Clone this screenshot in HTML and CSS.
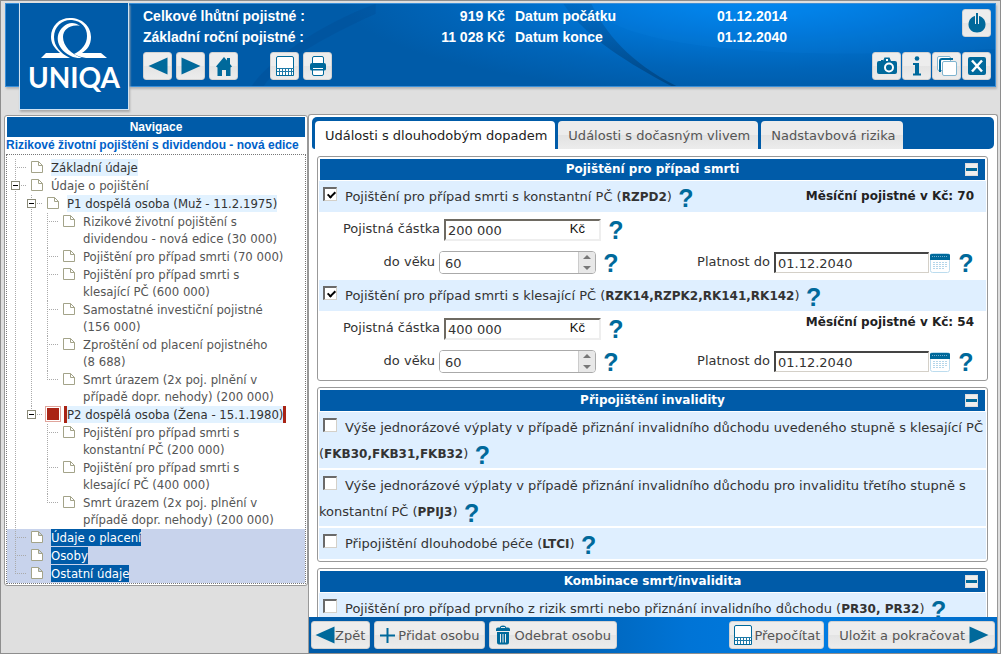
FILE: index.html
```html
<!DOCTYPE html>
<html lang="cs">
<head>
<meta charset="utf-8">
<title>UNIQA – Rizikové životní pojištění</title>
<link rel="stylesheet" href="styles.css">
</head>
<body class="app">
<svg class="sprite" aria-hidden="true">
  <symbol id="i-left" viewBox="0 0 20 18"><path d="M19.500 0.500V17.500L0.500 9Z" fill="#00699b"/></symbol>
  <symbol id="i-right" viewBox="0 0 20 18"><path d="M0.500 0.500V17.500L19.500 9Z" fill="#00699b"/></symbol>
  <symbol id="i-calc" viewBox="0 0 18 20"><path d="M.5 19.500V2Q.5.5 2 .5H16Q17.500.5 17.500 2V19.500Z" fill="#fff" stroke="#00699b"/><path d="M0 12.500H18M1 15.500H17M3.500 12V19M6.500 12V19M9.500 12V19M12.500 12V19M15.500 12V19" stroke="#1f7aa8" fill="none"/></symbol>
  <symbol id="i-page" viewBox="0 0 12 12"><path d="M.5.5H7.500L11.500 4.500V11.500H.5ZM7.500.5V4.500H11.500" fill="#fff" stroke="#a3a389"/></symbol>
  <symbol id="i-cal" viewBox="0 0 20 20"><rect x=".5" y=".5" width="19" height="19" rx="2" fill="#fff" stroke="#bcdcee"/><path d="M0 7V2Q0 1 2 1H18Q20 1 20 2V7Z" fill="#00699b"/><path d="M2 3.500H18" stroke="#77b0cf" stroke-dasharray="1 1"/><path d="M3 9.500H17M3 11.500H17M3 13.500H17M3 15.500H15" stroke="#b4d6ea" stroke-dasharray="2 1"/></symbol>
</svg>

<header class="top">
  <svg class="swoosh" viewBox="0 0 990 84" preserveAspectRatio="none" aria-hidden="true">
    <defs><linearGradient id="sw" x1="0" y1="0" x2="0" y2="1"><stop offset="0" stop-color="#004f96" stop-opacity=".25"/><stop offset="1" stop-color="#004480" stop-opacity=".85"/></linearGradient></defs>
    <path d="M558 0H586C600 30 625 60 671 84H666C625 62 580 34 558 0Z" fill="url(#sw)"/>
    <path d="M586 0C600 35 720 62 990 46V0Z" fill="#1a9cff" fill-opacity=".08"/>
    <path d="M258 84C275 60 310 38 370 10V0C310 22 262 60 246 84Z" fill="#003f80" fill-opacity=".18"/>
  </svg>
  <a class="logo" href="#" aria-label="UNIQA">
    <svg class="logo-mark" viewBox="0 0 66 42" aria-hidden="true"><path fill="#fff" d="M0 41L5 36H19C13 31 10 26 10 20C10 9 18 1 29 1C41 1 50 9 50 20C50 28 46 33 41 36H60L66 41H45C40 40 36 39 33 37C41 33 46 27 46 19C46 11 41 4 31 3C22 2 13 9 13 20C13 29 19 36 29 41Z"/><path fill="#fff" d="M39 9C34 5 27 5 22 10C13 18 15 33 32 40C35 41 38 41 41 41C30 37 22 29 22 20C22 13 29 7 39 9Z"/></svg>
    <span class="logo-text">UNIQA</span>
  </a>
  <div class="top-info">
    <div class="totals">
      <span>Celkové lhůtní pojistné :</span><span class="num">919 Kč</span><span>Datum počátku</span><span>01.12.2014</span>
      <span>Základní roční pojistné :</span><span class="num">11 028 Kč</span><span>Datum konce</span><span>01.12.2040</span>
    </div>
    <div class="tools">
      <button class="btn icon" aria-label="Zpět"><svg width="20" height="18"><use href="#i-left"/></svg></button>
      <button class="btn icon" aria-label="Vpřed"><svg width="20" height="18"><use href="#i-right"/></svg></button>
      <button class="btn icon" aria-label="Domů"><svg width="18" height="20" viewBox="0 0 18 20"><path d="M1 10.500L9 1L12 4.500V2H15V8L17 10.500L15.500 11.500V20H11V14H7V20H2.500V11.500Z" fill="#00699b"/></svg></button>
      <button class="btn icon calc" aria-label="Přepočet"><svg width="18" height="20"><use href="#i-calc"/></svg></button>
      <button class="btn icon" aria-label="Tisk"><svg width="18" height="20" viewBox="0 0 18 20"><rect x="3.500" y=".5" width="11" height="19" rx="1.500" fill="#fff" stroke="#00699b"/><path d="M3 7H15Q17 7 17 9V13Q17 14.500 15 14.500H3Q1 14.500 1 13V9Q1 7 3 7Z" fill="#00699b"/><path d="M4 12.500H14" stroke="#fff"/></svg></button>
    </div>
  </div>
  <div class="top-right">
    <button class="btn icon" aria-label="Odhlásit"><svg width="18" height="20" viewBox="0 0 18 20"><path d="M9 2.500C13 2.500 17.500 6 17.500 11.500C17.500 16 14 19.500 9 19.500S.5 16 .5 11.500C.5 6 5 2.500 9 2.500Z" fill="#00699b"/><path d="M9 0V11" stroke="#eee" stroke-width="4"/><path d="M9 0V11" stroke="#00699b" stroke-width="2"/></svg></button>
    <div class="mini">
      <button class="btn icon" aria-label="Snímek"><svg width="20" height="20" viewBox="0 0 20 20"><path d="M0 7Q0 5 2 5H4V4H6V5L7.500 1.500H12.500L14 5H18Q20 5 20 7V16Q20 18 18 18H2Q0 18 0 16Z" fill="#00699b"/><circle cx="12" cy="11.500" r="4" fill="none" stroke="#fff" stroke-width="2"/><rect x="9" y="3" width="2" height="2" fill="#fff"/></svg></button>
      <button class="btn icon" aria-label="Informace"><svg width="10" height="20" viewBox="0 0 10 20"><circle cx="5" cy="2.500" r="2.300" fill="#00699b"/><path d="M1 7H7V17.500H9V19.500H1V17.500H3V9H1Z" fill="#00699b"/></svg></button>
      <button class="btn icon" aria-label="Okna"><svg width="20" height="20" viewBox="0 0 20 20"><rect x=".5" y=".5" width="13" height="14" rx="1.500" fill="#fff" stroke="#7fb4cf"/><path d="M3 16V5Q3 3 5 3H16" fill="none" stroke="#00699b" stroke-width="2"/><rect x="5.500" y="5.500" width="14" height="14" rx="1.500" fill="#fff" stroke="#7fb4cf"/></svg></button>
      <button class="btn icon" aria-label="Zavřít"><svg width="18" height="18" viewBox="0 0 18 18"><rect width="18" height="18" rx="2" fill="#00699b"/><path d="M4 3.500L14 14.500M14 3.500L4 14.500" stroke="#fff" stroke-width="2.500"/></svg></button>
    </div>
  </div>
</header>

<div class="columns">
  <nav class="nav" aria-label="Navigace">
    <h2 class="nav-title">Navigace</h2>
    <p class="nav-product">Rizikové životní pojištění s dividendou - nová edice</p>
    <ul class="tree">
      <li><div class="node"><i class="link"></i><svg class="page"><use href="#i-page"/></svg><a class="hot" href="#">Základní údaje</a></div></li>
      <li><div class="node"><i class="link"></i><button class="toggle" aria-label="Sbalit"></button><svg class="page"><use href="#i-page"/></svg><a href="#">Údaje o pojištění</a></div>
        <ul>
          <li><div class="node"><i class="link"></i><button class="toggle" aria-label="Sbalit"></button><svg class="page"><use href="#i-page"/></svg><a class="hot" href="#">P1 dospělá osoba (Muž - 11.2.1975)</a></div>
            <ul>
              <li><div class="node"><i class="link"></i><svg class="page"><use href="#i-page"/></svg><a href="#">Rizikové životní pojištění s dividendou - nová edice (30&nbsp;000)</a></div></li>
              <li><div class="node"><i class="link"></i><svg class="page"><use href="#i-page"/></svg><a href="#">Pojištění pro případ smrti (70&nbsp;000)</a></div></li>
              <li><div class="node"><i class="link"></i><svg class="page"><use href="#i-page"/></svg><a href="#">Pojištění pro případ smrti s klesající PČ (600&nbsp;000)</a></div></li>
              <li><div class="node"><i class="link"></i><svg class="page"><use href="#i-page"/></svg><a href="#">Samostatné investiční pojistné (156&nbsp;000)</a></div></li>
              <li><div class="node"><i class="link"></i><svg class="page"><use href="#i-page"/></svg><a href="#">Zproštění od placení pojistného (8&nbsp;688)</a></div></li>
              <li><div class="node"><i class="link"></i><svg class="page"><use href="#i-page"/></svg><a href="#">Smrt úrazem (2x poj. plnění v případě dopr. nehody) (200&nbsp;000)</a></div></li>
            </ul>
          </li>
          <li><div class="node"><i class="link"></i><button class="toggle" aria-label="Sbalit"></button><span class="page alert"></span><a class="hot current" href="#">P2 dospělá osoba (Žena - 15.1.1980)</a></div>
            <ul>
              <li><div class="node"><i class="link"></i><svg class="page"><use href="#i-page"/></svg><a href="#">Pojištění pro případ smrti s konstantní PČ (200&nbsp;000)</a></div></li>
              <li><div class="node"><i class="link"></i><svg class="page"><use href="#i-page"/></svg><a href="#">Pojištění pro případ smrti s klesající PČ (400&nbsp;000)</a></div></li>
              <li><div class="node"><i class="link"></i><svg class="page"><use href="#i-page"/></svg><a href="#">Smrt úrazem (2x poj. plnění v případě dopr. nehody) (200&nbsp;000)</a></div></li>
            </ul>
          </li>
        </ul>
      </li>
      <li class="picked"><div class="node"><i class="link"></i><svg class="page"><use href="#i-page"/></svg><a href="#">Údaje o placení</a></div></li>
      <li class="picked"><div class="node"><i class="link"></i><svg class="page"><use href="#i-page"/></svg><a href="#">Osoby</a></div></li>
      <li class="picked"><div class="node"><i class="link"></i><svg class="page"><use href="#i-page"/></svg><a href="#">Ostatní údaje</a></div></li>
    </ul>
  </nav>

  <main class="main">
    <div class="tabs" role="tablist">
      <button class="tab active" role="tab" aria-selected="true">Události s dlouhodobým dopadem</button>
      <button class="tab" role="tab">Události s dočasným vlivem</button>
      <button class="tab" role="tab">Nadstavbová rizika</button>
    </div>

    <div class="sections">
      <section class="box">
        <div class="box-head"><h3>Pojištění pro případ smrti</h3><button class="fold" aria-label="Sbalit"></button></div>
        <div class="risk">
          <span class="price">Měsíční pojistné v Kč: 70</span>
          <input class="check" type="checkbox" id="r1" checked><label for="r1">Pojištění pro případ smrti s konstantní PČ (<b>RZPD2</b>)</label> <button class="help" aria-label="Nápověda">?</button>
        </div>
        <div class="fields">
          <div class="field-row">
            <label class="wide" for="a1">Pojistná částka</label>
            <span class="money"><input class="text" id="a1" value="200 000"><span class="unit">Kč</span></span>
            <button class="help" aria-label="Nápověda">?</button>
          </div>
          <div class="field-row">
            <label class="narrow" for="v1">do věku</label>
            <span class="spin"><input id="v1" value="60"><span class="arrows"><button class="up" aria-label="Více"></button><button class="down" aria-label="Méně"></button></span></span>
            <button class="help" aria-label="Nápověda">?</button>
            <span class="valid"><label for="d1">Platnost do</label><input class="text date" id="d1" value="01.12.2040"><button class="cal" aria-label="Kalendář"><svg width="20" height="20"><use href="#i-cal"/></svg></button><button class="help" aria-label="Nápověda">?</button></span>
          </div>
        </div>
        <div class="risk">
          <input class="check" type="checkbox" id="r2" checked><label for="r2">Pojištění pro případ smrti s klesající PČ (<b>RZK14,RZPK2,RK141,RK142</b>)</label> <button class="help" aria-label="Nápověda">?</button>
        </div>
        <div class="fields">
          <div class="field-row">
            <label class="wide" for="a2">Pojistná částka</label>
            <span class="money"><input class="text" id="a2" value="400 000"><span class="unit">Kč</span></span>
            <button class="help" aria-label="Nápověda">?</button>
            <span class="price push">Měsíční pojistné v Kč: 54</span>
          </div>
          <div class="field-row">
            <label class="narrow" for="v2">do věku</label>
            <span class="spin"><input id="v2" value="60"><span class="arrows"><button class="up" aria-label="Více"></button><button class="down" aria-label="Méně"></button></span></span>
            <button class="help" aria-label="Nápověda">?</button>
            <span class="valid"><label for="d2">Platnost do</label><input class="text date" id="d2" value="01.12.2040"><button class="cal" aria-label="Kalendář"><svg width="20" height="20"><use href="#i-cal"/></svg></button><button class="help" aria-label="Nápověda">?</button></span>
          </div>
        </div>
      </section>

      <section class="box spaced">
        <div class="box-head"><h3>Připojištění invalidity</h3><button class="fold" aria-label="Sbalit"></button></div>
        <div class="risk"><input class="check" type="checkbox" id="r3"><label for="r3">Výše jednorázové výplaty v případě přiznání invalidního důchodu uvedeného stupně s klesající PČ (<b>FKB30,FKB31,FKB32</b>)</label> <button class="help" aria-label="Nápověda">?</button></div>
        <div class="risk"><input class="check" type="checkbox" id="r4"><label for="r4">Výše jednorázové výplaty v případě přiznání invalidního důchodu pro invaliditu třetího stupně s konstantní PČ (<b>PPIJ3</b>)</label> <button class="help" aria-label="Nápověda">?</button></div>
        <div class="risk"><input class="check" type="checkbox" id="r5"><label for="r5">Připojištění dlouhodobé péče (<b>LTCI</b>)</label> <button class="help" aria-label="Nápověda">?</button></div>
      </section>

      <section class="box">
        <div class="box-head"><h3>Kombinace smrt/invalidita</h3><button class="fold" aria-label="Sbalit"></button></div>
        <div class="risk"><input class="check" type="checkbox" id="r6"><label for="r6">Pojištění pro případ prvního z rizik smrti nebo přiznání invalidního důchodu (<b>PR30, PR32</b>)</label> <button class="help" aria-label="Nápověda">?</button></div>
      </section>
    </div>

    <footer class="actions">
      <button class="btn back"><svg width="20" height="18"><use href="#i-left"/></svg>Zpět</button>
      <button class="btn plus"><svg width="15" height="15" viewBox="0 0 15 15"><path d="M7.500 0V15M0 7.500H15" stroke="#00699b" stroke-width="2"/></svg>Přidat osobu</button>
      <button class="btn bin"><svg width="14" height="20" viewBox="0 0 14 20"><path d="M0 4.500Q0 2.500 2 2.500H4Q4 .5 7 .5T10 2.500H12Q14 2.500 14 4.500V6H0ZM1 7H13V17.500Q13 19.500 11 19.500H3Q1 19.500 1 17.500Z" fill="#00699b"/><path d="M4.500 9V17.500M7 9V17.500M9.500 9V17.500M5 2.500H9" stroke="#eee"/></svg>Odebrat osobu</button>
      <button class="btn recalc"><svg width="18" height="20"><use href="#i-calc"/></svg>Přepočítat</button>
      <button class="btn save">Uložit a pokračovat<svg width="20" height="18"><use href="#i-right"/></svg></button>
    </footer>
  </main>
</div>
</body>
</html>
```

FILE: styles.css
```css
* { box-sizing: border-box; }
.app {
  margin: 0;
  height: 100vh;
  display: flex;
  flex-direction: column;
  overflow: hidden;
  border: 1px solid #8e8e8e;
  background: #dfdfdf;
  color: #333;
  font: 13px/17px Verdana, "DejaVu Sans", sans-serif;
}
.sprite { display: none; }
button, input { font: inherit; color: inherit; margin: 0; }
button { cursor: pointer; padding: 0; }
svg { flex: none; display: block; }

.top {
  position: relative;
  display: flex;
  flex: none;
  margin: 2px 4px 0;
  border: 1px solid #3b8fd8;
  background: radial-gradient(ellipse 420px 100px at 76% -12%, #008af5, #0079dc 35%, #0064b8 75%, #005ba8 100%);
  box-shadow: 1px 2px 2px #b5b5b5;
  color: #fff;
}
.swoosh { position: absolute; inset: 0; width: 100%; height: 100%; }
.logo {
  position: relative;
  display: flex;
  flex-direction: column;
  align-items: center;
  width: 110px;
  height: 107px;
  margin: -1px 14px -24px 13px;
  padding-top: 14px;
  border: 1px solid #cfe2f2;
  border-top: 0;
  background: #005ba8;
  box-shadow: 1px 2px 2px #aaa;
  color: #fff;
  text-decoration: none;
}
.logo-mark { width: 66px; height: 42px; }
.logo-text { font: 700 28px/36px Lato, sans-serif; }
.top-info { position: relative; flex: 1; padding: 2px 0 6px; }
.totals {
  display: grid;
  grid-template-columns: 222px 130px 192px auto;
  column-gap: 10px;
  font: 700 14px/21px "Liberation Sans", Arial, sans-serif;
}
.num { text-align: right; }
.tools { display: flex; gap: 4px; margin-top: 4px; }
.calc { margin-left: 28px; }
.top-right {
  position: relative;
  display: flex;
  flex-direction: column;
  justify-content: space-between;
  align-items: flex-end;
  padding: 5px 4px 6px 0;
}
.mini { display: flex; gap: 1px; }

.btn {
  display: flex;
  align-items: center;
  height: 28px;
  padding: 0 5px;
  border: 1px solid #d2d2d2;
  border-radius: 3px;
  background: linear-gradient(#ededed 50%, #e4e4e4 50%, #ececec);
  color: #555;
}
.icon { width: 29px; padding: 0; justify-content: center; }

.columns { flex: 1; min-height: 0; display: flex; margin: 27px 2px 0 3px; }
.nav {
  width: 304px;
  flex: none;
  align-self: flex-start;
  margin-top: 1px;
  padding: 1px;
  border: 1px solid #999;
  border-radius: 3px;
  background: #fff;
}
.nav-title {
  margin: 0 1px;
  background: #005ba8;
  color: #fff;
  font: 700 12px/20px "Liberation Sans", Arial, sans-serif;
  text-align: center;
}
.nav-product { margin: 1px 0; color: #0061c9; font: 700 12px/15px "Liberation Sans", Arial, sans-serif; white-space: nowrap; }
.tree {
  border: 1px dotted #777;
  padding-top: 4px;
  font: 13px/17px Tahoma, "DejaVu Sans Condensed", sans-serif;
}
.tree, .tree ul { list-style: none; margin: 0; }
.tree ul { margin-left: 16px; padding: 0; }
.tree { padding-left: 0; }
.tree li {
  background: repeating-linear-gradient(#aaa 0 1px, transparent 1px 2px) 0 0 / 1px 100% no-repeat;
}
.tree > li { padding-left: 8px; background-position: 8px 0; }
.tree li:last-child { background-size: 1px 10px; }
.tree .picked { background-color: #c8d3ec; }
.node { position: relative; display: flex; align-items: flex-start; padding-bottom: 1px; }
.link {
  width: 11px;
  height: 1px;
  margin: 8px 5px 0 0;
  flex: none;
  background: repeating-linear-gradient(90deg, #aaa 0 1px, transparent 1px 2px);
}
.toggle {
  position: absolute;
  left: -4px;
  top: 4px;
  width: 9px;
  height: 9px;
  border: 1px solid #8a8a78;
  background: linear-gradient(#000, #000) center / 5px 1px no-repeat #fff;
}
.page { width: 12px; height: 12px; margin: 2px 8px 0 0; flex: none; }
.alert { background: #a92415; outline: 1px solid #e0a59c; outline-offset: 1px; }
.node a { color: #555; text-decoration: none; max-width: 204px; }
.node a.hot { max-width: none; background: #e2f2ff; color: #333; white-space: nowrap; }
.node a.current { margin-left: -3px; border: solid #a92415; border-width: 0 3px; }
.tree .picked a { background: #005ba8; color: #fff; }

.main {
  flex: 1;
  min-width: 0;
  display: flex;
  flex-direction: column;
  border: 1px solid #999;
  border-bottom: 0;
  border-radius: 3px 3px 0 0;
  background: #fff;
}
.tabs {
  display: flex;
  gap: 3px;
  flex: none;
  margin: 2px 3px 0;
  padding: 4px 3px 0;
  border-radius: 5px 5px 5px 3px;
  background: #005ba8;
}
.tab {
  height: 28px;
  padding: 0 8px 0 10px;
  border: 0;
  border-radius: 4px 4px 0 0;
  background: linear-gradient(#ececec 50%, #e2e2e2 50%, #ececec);
  color: #555;
}
.tab.active { background: #fff; color: #222; }
.sections { flex: 1; min-height: 0; overflow-y: auto; scrollbar-width: none; padding: 7px 9px 0 8px; }
.box { margin-bottom: 6px; padding: 2px 1px 1px; border: 1px solid #999; border-radius: 3px; }
.box-head { display: flex; align-items: center; margin: 0 1px 1px; padding: 0 7px 0 20px; background: #005ba8; color: #fff; }
.box-head h3 { flex: 1; margin: 0; font-size: 12px; line-height: 21px; text-align: center; }
.fold { width: 13px; height: 13px; border: 1px solid #ddd; background: linear-gradient(#00699b, #00699b) center / 11px 3px no-repeat #eee; }
.risk { min-height: 31px; padding: 3px 0 1px; background: #dfefff; line-height: 26px; }
.risk b { font-size: 12px; }
.spaced { padding-bottom: 2px; }
.spaced .risk + .risk { margin-top: 2px; }
.check {
  appearance: none;
  position: relative;
  width: 14px;
  height: 14px;
  margin: 0 8px 0 4px;
  vertical-align: 0;
  border: solid;
  border-width: 2px 1px 1px 2px;
  border-color: #6a6a6a #d4d0c8 #d4d0c8 #6a6a6a;
  background: #fff;
}
.check:checked::after {
  content: "";
  position: absolute;
  left: 4px;
  top: 1px;
  width: 3px;
  height: 6px;
  border: solid #000;
  border-width: 0 2px 2px 0;
  transform: rotate(45deg);
}
.price { float: right; margin-right: 12px; color: #222; font-weight: 700; line-height: 24px; font-size: 12px; }
.push { margin-left: auto; align-self: flex-start; line-height: 20px; }
.help {
  width: 16px;
  height: 24px;
  margin-left: 4px;
  border: 0;
  background: none;
  color: #00699b;
  font: 700 25px/24px "Liberation Sans", Arial, sans-serif;
  vertical-align: middle;
}
.risk .help { margin-left: 2px; }
.fields { padding: 1px 0; }
.field-row { display: flex; align-items: center; height: 33px; }
.field-row label { text-align: right; padding-bottom: 2px; }
.wide { width: 121px; }
.narrow { width: 116px; }
.money, .spin { position: relative; width: 157px; margin: 0 3px 0 4px; }
.text {
  width: 100%;
  height: 22px;
  padding: 1px 2px 0;
  border: 2px solid;
  border-color: #6e6a62 #eee #eee #6e6a62;
  background: #fff;
}
.unit { position: absolute; right: 16px; top: 1px; color: #111; font: 13px/17px "Liberation Sans", Arial, sans-serif; }
.spin { display: flex; height: 23px; border: 1px solid #aaa; border-radius: 4px; overflow: hidden; background: #fff; }
.spin input { flex: 1; min-width: 0; border: 0; padding: 1px 5px 0; }
.arrows { width: 17px; display: flex; flex-direction: column; border-left: 1px solid #ccc; background: #e8e8e8; }
.arrows button { flex: 1; display: flex; align-items: center; justify-content: center; border: 0; background: none; }
.up::before, .down::before { content: ""; border: 4px solid transparent; }
.up::before { border-top: 0; border-bottom-color: #777; }
.down::before { border-bottom: 0; border-top-color: #777; }
.valid { display: flex; align-items: center; margin-left: auto; padding-right: 12px; }
.date { width: 155px; height: 21px; margin-left: 4px; border-width: 2px 1px 1px 2px; border-color: #444 #d4d0c8 #d4d0c8 #444; }
.cal { height: 20px; margin: 0 4px 0 1px; border: 0; background: none; }

.actions {
  display: flex;
  flex: none;
  gap: 4px;
  padding: 4px 2px;
  background: linear-gradient(90deg, #005ba8 0, #005ba8 30%, #0074d6 55%, #007ce2 75%, #006cc8);
}
.back { padding: 0 4px 0 3px; }
.plus { padding: 0 5px; }
.plus svg { margin-right: 3px; }
.bin { padding: 0 5px 0 6px; }
.bin svg { margin-right: 4px; }
.recalc { margin-left: auto; padding: 0 3px 0 4px; }
.recalc svg { margin-right: 2px; }
.save { padding: 0 5px 0 10px; }
.save svg { margin-left: 4px; }
```
